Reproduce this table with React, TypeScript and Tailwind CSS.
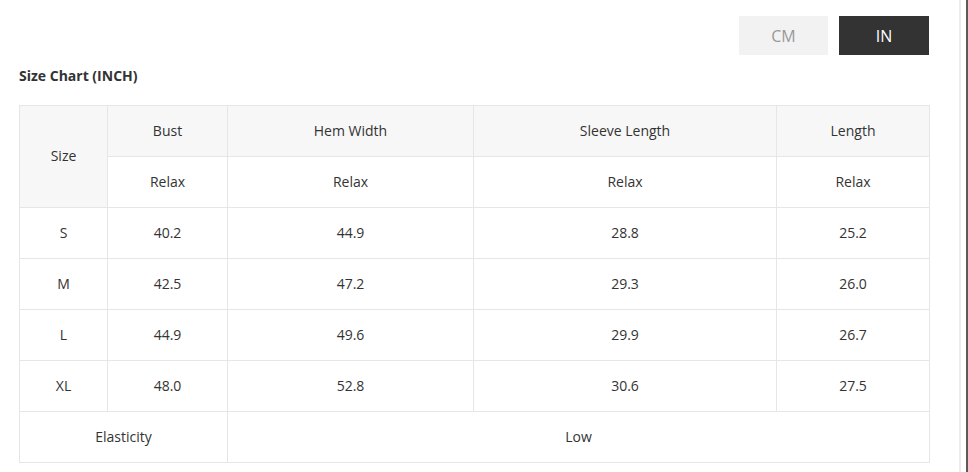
import React from "react";

const rows = [
  ["S", "40.2", "44.9", "28.8", "25.2"],
  ["M", "42.5", "47.2", "29.3", "26.0"],
  ["L", "44.9", "49.6", "29.9", "26.7"],
  ["XL", "48.0", "52.8", "30.6", "27.5"],
];

export default function App() {
  const cell = "border border-[#e6e6e6] text-center align-middle h-[51px] p-0 pb-[1px] leading-[20px]";
  return (
    <div className="relative w-[968px] h-[472px] bg-white overflow-hidden text-[#333]" style={{ fontFamily: '"Open Sans", sans-serif' }}>
      <div className="w-[958px] pl-[19px] pr-[29px]">
        <div className="flex justify-end gap-[11px] pt-[16px]">
          <div className="w-[89px] h-[39px] bg-[#f2f2f2] text-[#999] text-[16px] flex items-center justify-center">CM</div>
          <div className="w-[90px] h-[39px] bg-[#333] text-white text-[16px] flex items-center justify-center">IN</div>
        </div>
        <div className="mt-[11px] text-[14px] font-bold leading-[20px] text-[#333]">Size Chart (INCH)</div>
        <table className="mt-[19px] w-[910px] border-collapse text-[14px] table-fixed">
          <colgroup>
            <col className="w-[88px]" />
            <col className="w-[120px]" />
            <col className="w-[246px]" />
            <col className="w-[303px]" />
            <col className="w-[153px]" />
          </colgroup>
          <tbody>
            <tr className="bg-[#f7f7f7]">
              <td rowSpan={2} className={cell + " bg-[#f7f7f7]"}>Size</td>
              <td className={cell}>Bust</td>
              <td className={cell}>Hem Width</td>
              <td className={cell}>Sleeve Length</td>
              <td className={cell}>Length</td>
            </tr>
            <tr className="bg-white">
              <td className={cell}>Relax</td>
              <td className={cell}>Relax</td>
              <td className={cell}>Relax</td>
              <td className={cell}>Relax</td>
            </tr>
            {rows.map((r) => (
              <tr key={r[0]}>
                {r.map((v, i) => (
                  <td key={i} className={cell}>{v}</td>
                ))}
              </tr>
            ))}
            <tr>
              <td colSpan={2} className={cell}>Elasticity</td>
              <td colSpan={3} className={cell}>Low</td>
            </tr>
          </tbody>
        </table>
      </div>
      <div className="absolute top-0 bottom-0 left-[959px] w-[2px] bg-[#ececec]" />
      <div className="absolute top-0 bottom-0 left-[966px] w-[2px] bg-[#5a5a5a]" />
    </div>
  );
}
